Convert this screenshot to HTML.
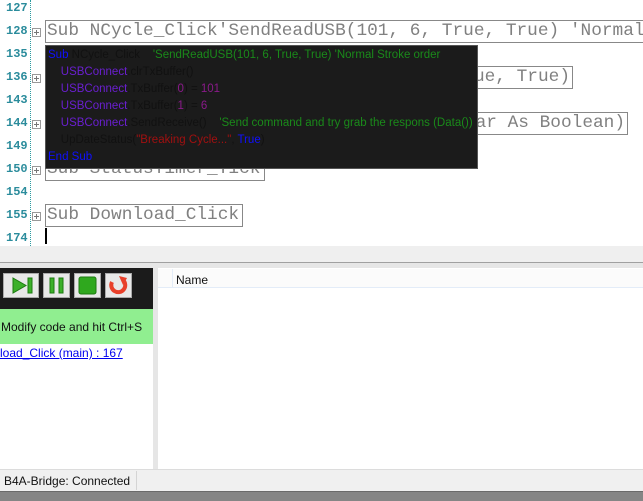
<!DOCTYPE html><html><head><style>
body{margin:0;width:643px;height:501px;overflow:hidden;background:#fff;position:relative;font-family:"Liberation Sans",sans-serif}
div{position:absolute;box-sizing:border-box}
.ln{left:6px;font:bold 12px "Liberation Mono",monospace;color:#2b8c9c;width:24px}
.pl{left:32px;width:9px;height:9px;border:1px solid #999;background:#fff}
.pl:before{content:"";position:absolute;left:1px;top:3px;width:5px;height:1px;background:#777}
.pl:after{content:"";position:absolute;left:3px;top:1px;width:1px;height:5px;background:#777}
.cb{left:45px;border:1px solid #888;height:23px;font:17.8px "Liberation Mono",monospace;color:#808080;padding-left:1px;line-height:21px;white-space:pre;overflow:hidden}
.tt{font:11.5px "Liberation Sans",sans-serif;white-space:pre;line-height:17px}
.btn{top:273px;height:25px;background:#e8e8e8;border:1px solid #aaa}
</style></head><body>
<div style="left:30px;top:0;height:246px;border-left:1px dotted #2b9aa0"></div>
<div class="ln" style="top:1px">127</div>
<div class="ln" style="top:24px">128</div>
<div class="ln" style="top:47px">135</div>
<div class="ln" style="top:70px">136</div>
<div class="ln" style="top:93px">143</div>
<div class="ln" style="top:116px">144</div>
<div class="ln" style="top:139px">149</div>
<div class="ln" style="top:162px">150</div>
<div class="ln" style="top:185px">154</div>
<div class="ln" style="top:208px">155</div>
<div class="ln" style="top:231px">174</div>
<div class="pl" style="top:28px"></div><div class="pl" style="top:74px"></div><div class="pl" style="top:120px"></div><div class="pl" style="top:166px"></div><div class="pl" style="top:212px"></div>
<div class="cb" style="top:20px;width:610px">Sub NCycle_Click'SendReadUSB(101, 6, True, True) 'Normal</div>
<div class="cb" style="top:66px;width:528px;text-align:right;padding-right:2px">ue, True)</div>
<div class="cb" style="top:112px;width:583px;text-align:right;padding-right:2px">ar As Boolean)</div>
<div class="cb" style="top:158px;width:220px">Sub StatusTimer_Tick</div>
<div class="cb" style="top:204px;width:198px">Sub Download_Click</div>
<div style="left:45px;top:228px;width:2px;height:16px;background:#000"></div>
<div style="left:45px;top:45px;width:433px;height:124px;background:#1b1b1b;border:1px solid #555;padding:1px 0 0 2px">
<div class="tt" style="position:static"><span style="color:#1010ff">Sub</span><span style="color:#111"> NCycle_Click</span>    <span style="color:#1a8a1a">'SendReadUSB(101, 6, True, True) 'Normal Stroke order</span>
    <span style="color:#6a1fd0">USBConnect</span><span style="color:#111">.clrTxBuffer()</span>
    <span style="color:#6a1fd0">USBConnect</span><span style="color:#111">.TxBuffer(</span><span style="color:#8a1a8a">0</span><span style="color:#111">) = </span><span style="color:#8a1a8a">101</span>
    <span style="color:#6a1fd0">USBConnect</span><span style="color:#111">.TxBuffer(</span><span style="color:#8a1a8a">1</span><span style="color:#111">) = </span><span style="color:#8a1a8a">6</span>
    <span style="color:#6a1fd0">USBConnect</span><span style="color:#111">.SendReceive()</span>    <span style="color:#1a8a1a">'Send command and try grab the respons (Data())</span>
    <span style="color:#111">UpDateStatus(</span><span style="color:#a01010">"Breaking Cycle..."</span><span style="color:#111">, </span><span style="color:#1010ff">True</span><span style="color:#111">)</span>
<span style="color:#1010ff">End Sub</span></div></div>
<div style="left:0;top:246px;width:643px;height:16px;background:#efefef"></div>
<div style="left:0;top:262px;width:643px;height:1px;background:#a0a0a0"></div>
<div style="left:0;top:263px;width:643px;height:206px;background:#e6e6e6"></div>
<div style="left:0;top:268px;width:153px;height:201px;background:#fff"></div>
<div style="left:0;top:268px;width:153px;height:41px;background:#1b1b1b"></div>
<div class="btn" style="left:3px;width:36px"><svg width="34" height="23"><path d="M9 4 L22 11.5 L9 19Z" fill="#3cb02a" stroke="#1c7a10"/><rect x="24" y="4" width="4" height="15" fill="#3cb02a" stroke="#1c7a10"/></svg></div>
<div class="btn" style="left:43px;width:27px"><svg width="25" height="23"><rect x="6" y="4" width="4" height="15" fill="#3cb02a" stroke="#1c7a10"/><rect x="15" y="4" width="4" height="15" fill="#3cb02a" stroke="#1c7a10"/></svg></div>
<div class="btn" style="left:74px;width:27px"><svg width="25" height="23"><rect x="4" y="3" width="17" height="17" rx="2" fill="#2fa81e" stroke="#1c7a10"/></svg></div>
<div class="btn" style="left:105px;width:27px"><svg width="25" height="23"><path d="M6 8 A7 7 0 1 0 17 6" fill="none" stroke="#e8402a" stroke-width="4"/><path d="M13 2 L21 4 L17 11Z" fill="#e8402a"/></svg></div>
<div style="left:0;top:309px;width:153px;height:35px;background:#90ee90;font-size:12px;padding:11px 0 0 1px;color:#111">Modify code and hit Ctrl+S</div>
<div style="left:0;top:346px;font-size:12px;color:#0000ee;text-decoration:underline;white-space:nowrap">load_Click (main) : 167</div>
<div style="left:158px;top:268px;width:485px;height:201px;background:#fff"></div>
<div style="left:158px;top:269px;width:485px;height:19px;background:#fbfbfb;border-bottom:1px solid #e3ecf8"></div>
<div style="left:172px;top:269px;width:1px;height:19px;background:#e3ecf8"></div>
<div style="left:176px;top:273px;font-size:12px;color:#111">Name</div>
<div style="left:0;top:469px;width:643px;height:22px;background:#f0f0f0;border-top:1px solid #dcdcdc"></div>
<div style="left:136px;top:471px;width:1px;height:19px;background:#d4d4d4"></div>
<div style="left:4px;top:474px;font-size:12px;color:#111">B4A-Bridge: Connected</div>
<div style="left:0;top:491px;width:643px;height:10px;background:#858585;border-top:1px solid #6a6a6a"></div>
</body></html>
